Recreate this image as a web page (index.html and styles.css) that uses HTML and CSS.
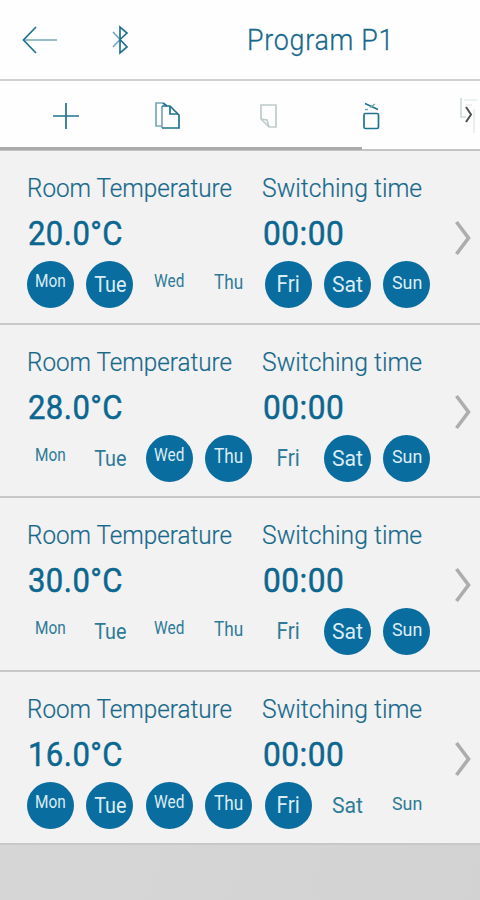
FILE: index.html
```html
<!DOCTYPE html>
<html lang="en">
<head>
    <meta charset="UTF-8">
    <meta name="viewport" content="width=device-width, initial-scale=1.0">
    <title>Program P1</title>
    <link rel="stylesheet" href="styles.css">
</head>
<body>

    <!-- Header -->
    <header class="header">
        <svg class="back" width="36" height="28" viewBox="0 0 36 28">
            <path class="soft" d="M2 14H35"/>
            <path d="M14 1L1.5 14L14 27"/>
        </svg>
        <svg class="bluetooth" width="16" height="30" viewBox="0 0 16 30">
            <path class="soft" d="M1 7L8 14.5L1 22"/>
            <path d="M8 14.5L15 22L8 28V2L15 8L8 14.5"/>
        </svg>
        <h1 class="title">Program P1</h1>
    </header>

    <!-- Toolbar -->
    <nav class="toolbar">
        <svg class="tool" width="28" height="28" viewBox="0 0 28 28">
            <path d="M14 1V27M1 14H27"/>
        </svg>
        <svg class="tool" width="28" height="28" viewBox="0 0 28 28">
            <path class="soft" d="M8 24H2V1H9"/>
            <path class="soft" d="M8 26V4"/>
            <path d="M8 4H16L25 13V26H8"/>
            <path d="M9 1L13 4M16 4V12H24"/>
        </svg>
        <svg class="tool disabled" width="28" height="28" viewBox="0 0 28 28">
            <path d="M5 3H20V25H13L5 17Z"/>
            <path d="M5 17L11 18L13 25"/>
        </svg>
        <svg class="tool" width="28" height="28" viewBox="0 0 28 28">
            <rect x="6" y="11.5" width="14.5" height="15" rx="1.5"/>
            <path class="lid" d="M7 1.5L20 7.5"/>
            <path class="lid soft" d="M7 7.5H10M12 5.5L17 2"/>
        </svg>
        <div class="more">
            <svg width="20" height="40" viewBox="0 0 20 40">
                <path class="ghost" d="M7 22H2V3"/>
                <path class="ghost faint" d="M5 5H18M15 14V38M7 10H13"/>
                <path class="next" d="M7 12L12 19.5L7 27"/>
            </svg>
        </div>
        <div class="scrollbar"></div>
    </nav>

    <!-- Switching times -->
    <main class="program" id="program"></main>

    <script>
        const days = ['Mon', 'Tue', 'Wed', 'Thu', 'Fri', 'Sat', 'Sun'];
        const entries = [
            { temp: '20.0°C', time: '00:00', active: ['Mon', 'Tue', 'Fri', 'Sat', 'Sun'] },
            { temp: '28.0°C', time: '00:00', active: ['Wed', 'Thu', 'Sat', 'Sun'] },
            { temp: '30.0°C', time: '00:00', active: ['Sat', 'Sun'] },
            { temp: '16.0°C', time: '00:00', active: ['Mon', 'Tue', 'Wed', 'Thu', 'Fri'] }
        ];

        document.getElementById('program').innerHTML = entries.map(entry => `
            <section class="entry">
                <div class="values">
                    <div class="label room">Room Temperature</div>
                    <div class="label time">Switching time</div>
                    <div class="value temp">${entry.temp}</div>
                    <div class="value clock">${entry.time}</div>
                </div>
                <div class="days">
                    ${days.map(day => `<div class="day ${day.toLowerCase()} ${entry.active.includes(day) ? 'on' : ''}"><span>${day}</span></div>`).join('')}
                </div>
                <svg class="arrow" width="18" height="36" viewBox="0 0 18 36">
                    <path d="M2.5 2L14.5 18L2.5 34"/>
                </svg>
            </section>`).join('');
    </script>

</body>
</html>
```

FILE: styles.css
```css
:root {
    --blue: #096d9f;
    --text: #17698c;
    --line: #c8c8c8;
}

* {
    box-sizing: border-box;
}

body {
    margin: 0;
    height: 900px;
    overflow: hidden;
    font-family: Roboto, "Liberation Sans", sans-serif;
    color: var(--text);
    background: linear-gradient(100deg, #d8d8d8, #d2d2d2);
}

svg {
    display: block;
    fill: none;
    stroke: #1f7390;
    stroke-width: 1.7;
}

/* Header */
.header {
    display: flex;
    align-items: center;
    height: 81px;
    padding-left: 22px;
    background: #fefefe;
    border-bottom: 2px solid #cfcfcf;
}

.bluetooth {
    margin-left: 54px;
}

.soft {
    stroke: #79a8b6;
}

.title {
    margin: 0 0 0 119px;
    font-size: 29px;
    font-weight: 300;
    line-height: 40px;
    letter-spacing: 0.8px;
    white-space: nowrap;
    -webkit-text-stroke: 0.3px;
    transform: scaleX(0.925);
    transform-origin: left;
}

/* Toolbar */
.toolbar {
    position: relative;
    display: flex;
    align-items: center;
    gap: 74px;
    height: 70px;
    padding: 2px 0 0 52px;
    background: #fefefe;
    border-bottom: 2px solid #c4c4c4;
}

.tool {
    flex: none;
}

.disabled {
    stroke: #c0cbcb;
}

.lid {
    stroke-width: 1.5;
}

.more {
    flex: none;
    margin: -3px 0 0 -1px;
}

.ghost {
    stroke: #cfdbdb;
}

.faint {
    stroke: #e6eded;
}

.next {
    stroke: #505050;
    stroke-width: 2;
}

.scrollbar {
    position: absolute;
    left: 0;
    bottom: -1px;
    width: 362px;
    height: 3px;
    background: #ababab;
}

/* Entries */
.entry {
    position: relative;
    height: 173.5px;
    padding: 22px 0 0 27px;
    background: #f2f2f2;
    border-bottom: 2px solid var(--line);
}

.values {
    display: grid;
    grid-template-columns: 235px 180px;
    grid-template-rows: 30px 58px;
}

.label,
.value {
    white-space: nowrap;
    transform-origin: left;
}

.label {
    font-size: 26px;
    font-weight: 300;
    line-height: 30px;
    -webkit-text-stroke: 0.2px;
}

.room {
    transform: scaleX(0.932);
}

.time {
    transform: scaleX(0.95);
}

.value {
    padding-left: 1px;
    font-size: 33px;
    line-height: 61px;
    font-weight: 400;
    color: #0b6690;
    letter-spacing: 0.5px;
    -webkit-text-stroke: 0.5px;
}

.temp {
    transform: scaleX(0.94);
}

.clock {
    transform: scaleX(0.96);
}

.days {
    display: grid;
    grid-template-columns: repeat(7, 47px);
    gap: 12.4px;
}

.day {
    height: 47px;
    border-radius: 50%;
    text-align: center;
    line-height: 40px;
    color: #2e7a97;
}

.day span {
    display: inline-block;
    transform: scaleX(0.88);
}

.day.on {
    background: var(--blue);
    color: #dcecf4;
}

.mon, .wed {
    font-size: 17.5px;
}

.tue, .sat {
    font-size: 22.5px;
    line-height: 47px;
}

.thu {
    font-size: 19.5px;
    line-height: 43px;
}

.fri {
    font-size: 23.5px;
    line-height: 47px;
}

.sun {
    font-size: 19px;
    line-height: 43px;
}

.sat span, .sun span {
    transform: scaleX(0.94);
}

.arrow {
    position: absolute;
    left: 454px;
    top: 69px;
    stroke: #adadad;
    stroke-width: 3.6;
}
```
